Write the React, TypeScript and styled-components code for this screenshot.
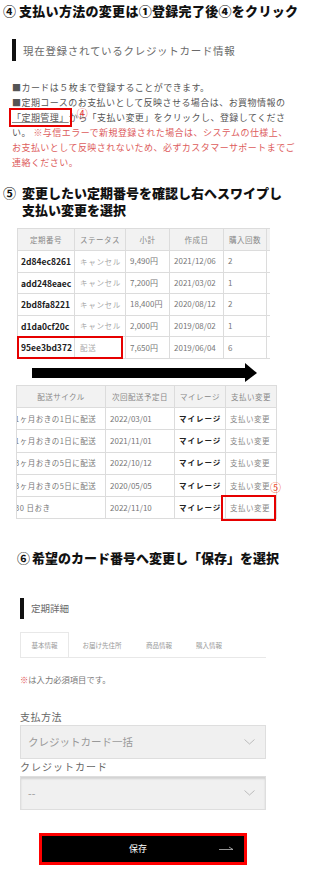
import styled, { createGlobalStyle } from 'styled-components';

const GlobalStyle = createGlobalStyle`
  html, body {
    margin: 0;
    padding: 0;
    background: #fff;
  }
  body {
    font-family: "Noto Sans CJK JP", "Noto Sans", sans-serif;
    color: #333;
  }
`;

const Page = styled.div`
  width: 311px;
  height: 881px;
  overflow: hidden;
  display: flex;
  flex-direction: column;
  align-items: flex-start;
`;

const StepTitle = styled.h2<{ $top: number; $left: number; $spacing?: number }>`
  margin: ${p => p.$top}px 0 0 ${p => p.$left}px;
  display: flex;
  align-items: flex-start;
  gap: ${p => p.$spacing ?? 3}px;
  font-size: 13px;
  font-weight: 900;
  line-height: 17px;
  color: #111;
  white-space: nowrap;
`;

const StepNum = styled.span`
  font-weight: 700;
`;

const StepText = styled.span<{ $ls?: number }>`
  letter-spacing: ${p => p.$ls ?? 0}px;
`;

const SectionLabel = styled.div<{ $top: number; $left: number; $size: number; $ls: number; $h: number }>`
  margin: ${p => p.$top}px 0 0 ${p => p.$left}px;
  height: ${p => p.$h}px;
  border-left: 4px solid #111;
  padding-left: 7px;
  display: flex;
  align-items: center;
  font-size: ${p => p.$size}px;
  letter-spacing: ${p => p.$ls}px;
  color: #6a6a6a;
`;

const Notes = styled.p`
  margin: 18.5px 0 0 12px;
  font-size: 9px;
  letter-spacing: 0.45px;
  line-height: 15px;
  color: #555;
  white-space: nowrap;
`;

const Warn = styled.span`
  color: #dd5c5c;
`;

const LinkBox = styled.span`
  position: relative;
  text-decoration: underline;
  text-decoration-color: #888;
  outline: 2px solid #e60000;
  outline-offset: 1px;
`;

const Callout = styled.span<{ $color: string }>`
  position: absolute;
  font-size: 11px;
  line-height: 11px;
  color: ${p => p.$color};
  letter-spacing: 0;
`;

const TableClip = styled.div<{ $top: number; $left: number; $width: number; $clip?: boolean }>`
  position: relative;
  margin: ${p => p.$top}px 0 0 ${p => p.$left}px;
  width: ${p => p.$width}px;
  overflow: ${p => (p.$clip ? 'hidden' : 'visible')};
`;

const Grid = styled.table<{ $width: number }>`
  width: ${p => p.$width}px;
  table-layout: fixed;
  border-collapse: collapse;
  border: 1px solid #dcdcdc;
`;

const Th = styled.th<{ $w: number; $h: number }>`
  width: ${p => p.$w}px;
  height: ${p => p.$h}px;
  padding: 0;
  background: #f2f2f2;
  border: 1px solid #dcdcdc;
  font-size: 7.5px;
  line-height: 1;
  letter-spacing: 0.5px;
  font-weight: 400;
  color: #888;
  text-align: center;
  white-space: nowrap;
  overflow: hidden;
`;

const Td = styled.td<{ $h: number; $kind?: 'id' | 'status' | 'num' | 'bold' | 'muted' | 'cycle'; $pad?: number }>`
  height: ${p => p.$h}px;
  padding: 0 0 0 ${p => p.$pad ?? 4}px;
  border: 1px solid #dcdcdc;
  line-height: 1;
  white-space: nowrap;
  overflow: hidden;
  font-size: ${p => (p.$kind === 'id' ? 8.5 : p.$kind === 'num' ? 8 : 7.5)}px;
  font-weight: ${p => (p.$kind === 'id' || p.$kind === 'bold' ? 700 : 400)};
  letter-spacing: ${p =>
    p.$kind === 'status' ? 0.7 : p.$kind === 'muted' ? 0.5 : p.$kind === 'bold' ? 1 : p.$kind === 'cycle' ? 0.5 : 0}px;
  color: ${p =>
    p.$kind === 'id' || p.$kind === 'bold'
      ? '#222'
      : p.$kind === 'status'
        ? '#aaa'
        : p.$kind === 'muted'
          ? '#888'
          : '#777'};
  text-indent: ${p => (p.$kind === 'cycle' ? -2 : 0)}px;
`;

const Marker = styled.div<{ $x: number; $y: number; $w: number; $h: number }>`
  position: absolute;
  left: ${p => p.$x}px;
  top: ${p => p.$y}px;
  width: ${p => p.$w}px;
  height: ${p => p.$h}px;
  box-sizing: border-box;
  border: 2.5px solid #e60000;
  pointer-events: none;
`;

const SwipeArrow = styled.svg`
  margin: 3px 0 0 32px;
  display: block;
`;

const Tabs = styled.div`
  margin: 13px 0 0 20px;
  width: 246px;
  height: 25px;
  display: flex;
  border-bottom: 1px solid #e8e8e8;
`;

const Tab = styled.div<{ $w: number; $active?: boolean }>`
  width: ${p => p.$w}px;
  height: 25px;
  box-sizing: border-box;
  display: flex;
  align-items: center;
  justify-content: center;
  border: 1px solid ${p => (p.$active ? '#e8e8e8' : 'transparent')};
  border-bottom: none;
  background: #fff;
  font-size: 6.5px;
  color: #999;
`;

const Required = styled.p`
  margin: 14px 0 0 20px;
  font-size: 8.3px;
  line-height: 14px;
  color: #777;
`;

const Star = styled.span`
  color: #e05050;
`;

const FieldLabel = styled.label<{ $top: number; $ls: number }>`
  margin: ${p => p.$top}px 0 0 20px;
  font-size: 10px;
  line-height: 14px;
  letter-spacing: ${p => p.$ls}px;
  color: #666;
`;

const SelectBox = styled.div<{ $top: number; $inset?: boolean }>`
  margin: ${p => p.$top}px 0 0 20px;
  width: 246px;
  height: 34px;
  box-sizing: border-box;
  padding: 0 10px 0 7px;
  display: flex;
  align-items: center;
  justify-content: space-between;
  background: #f0f0f0;
  border: 1px solid #dedede;
  box-shadow: ${p => (p.$inset ? 'inset 0 2px 2px rgba(0,0,0,0.12)' : 'none')};
  font-size: 10.5px;
  color: #999;
`;

const SaveButton = styled.button`
  margin: 23px 0 0 39px;
  width: 208px;
  height: 32px;
  box-sizing: border-box;
  padding: 0 10px 0 0;
  display: grid;
  grid-template-columns: 1fr auto 1fr;
  align-items: center;
  background: #000;
  border: 3px solid #f00;
  color: #fff;
  font-family: inherit;
  font-size: 9px;
`;

const ButtonArrow = styled.svg`
  justify-self: end;
`;

const Chevron = () => (
  <svg width="11" height="6" viewBox="0 0 11 6">
    <polyline points="0.5,0.5 5.5,5 10.5,0.5" fill="none" stroke="#b5b5b5" strokeWidth="0.9" />
  </svg>
);

const orders = [
  ['2d84ec8261', 'キャンセル', '9,490円', '2021/12/06', '2', '1'],
  ['add248eaec', 'キャンセル', '7,200円', '2021/03/02', '1', '1'],
  ['2bd8fa8221', 'キャンセル', '18,400円', '2020/08/12', '2', '3'],
  ['d1da0cf20c', 'キャンセル', '2,000円', '2019/08/02', '1', '3'],
  ['95ee3bd372', '配送', '7,650円', '2019/06/04', '6', '3'],
];

const cycles = [
  ['1ヶ月おきの1日に配送', '2022/03/01'],
  ['1ヶ月おきの1日に配送', '2021/11/01'],
  ['3ヶ月おきの5日に配送', '2022/10/12'],
  ['3ヶ月おきの5日に配送', '2020/05/05'],
  ['30 日おき', '2022/11/10'],
];

export default function App() {
  return (
    <Page>
      <GlobalStyle />

      <StepTitle $top={2} $left={3} $spacing={3}>
        <StepNum>④</StepNum>
        <StepText $ls={0.3}>支払い方法の変更は①登録完了後④をクリック</StepText>
      </StepTitle>

      <SectionLabel $top={20} $left={12} $size={10.5} $ls={0.7} $h={22}>
        現在登録されているクレジットカード情報
      </SectionLabel>

      <Notes>
        ■カードは５枚まで登録することができます。
        <br />
        ■定期コースのお支払いとして反映させる場合は、お買物情報の
        <br />
        <LinkBox>
          「定期管理」
          <Callout $color="#e63a3a" style={{ right: -19, top: -3 }}>④</Callout>
        </LinkBox>
        から「支払い変更」をクリックし、登録してくださ
        <br />
        い。 <Warn>※与信エラーで新規登録された場合は、システムの仕様上、</Warn>
        <br />
        <Warn>お支払いとして反映されないため、必ずカスタマーサポートまでご</Warn>
        <br />
        <Warn>連絡ください。</Warn>
      </Notes>

      <StepTitle $top={14} $left={3} $spacing={6}>
        <StepNum>⑤</StepNum>
        <StepText>
          変更したい定期番号を確認し右へスワイプし
          <br />
          支払い変更を選択
        </StepText>
      </StepTitle>

      <TableClip $top={10.5} $left={17} $width={253} $clip>
        <Grid $width={304}>
          <thead>
            <tr>
              <Th $w={56} $h={21}>定期番号</Th>
              <Th $w={50} $h={21}>ステータス</Th>
              <Th $w={43} $h={21}>小計</Th>
              <Th $w={53} $h={21}>作成日</Th>
              <Th $w={42} $h={21}>購入回数</Th>
              <Th $w={60} $h={21} />
            </tr>
          </thead>
          <tbody>
            {orders.map(r => (
              <tr key={r[0]}>
                <Td $h={20.6} $kind="id" $pad={3}>{r[0]}</Td>
                <Td $h={20.6} $kind="status" $pad={5}>{r[1]}</Td>
                <Td $h={20.6} $kind="num">{r[2]}</Td>
                <Td $h={20.6} $kind="num">{r[3]}</Td>
                <Td $h={20.6} $kind="num">{r[4]}</Td>
                <Td $h={20.6} $kind="num">{r[5]}</Td>
              </tr>
            ))}
          </tbody>
        </Grid>
        <Marker $x={0} $y={108} $w={106} $h={23} />
      </TableClip>

      <SwipeArrow width="226" height="21" viewBox="0 0 226 21">
        <rect x="0" y="6" width="216" height="10" fill="#000" />
        <polygon points="213,1 225,11 213,20" fill="#000" />
      </SwipeArrow>

      <TableClip $top={2} $left={16} $width={256}>
        <Grid $width={256}>
          <thead>
            <tr>
              <Th $w={88} $h={21}>配送サイクル</Th>
              <Th $w={68} $h={21}>次回配送予定日</Th>
              <Th $w={50} $h={21}>マイレージ</Th>
              <Th $w={50} $h={21}>支払い変更</Th>
            </tr>
          </thead>
          <tbody>
            {cycles.map((r, i) => (
              <tr key={i}>
                <Td $h={21.3} $kind="cycle" $pad={0}>{r[0]}</Td>
                <Td $h={21.3} $kind="num">{r[1]}</Td>
                <Td $h={21.3} $kind="bold">マイレージ</Td>
                <Td $h={21.3} $kind="muted" $pad={4}>支払い変更</Td>
              </tr>
            ))}
          </tbody>
        </Grid>
        <Marker $x={205} $y={110} $w={55} $h={26} />
        <Callout $color="#f04a1e" style={{ left: 254, top: 97 }}>⑤</Callout>
      </TableClip>

      <StepTitle $top={30} $left={17} $spacing={2}>
        <StepNum>⑥</StepNum>
        <StepText>希望のカード番号へ変更し「保存」を選択</StepText>
      </StepTitle>

      <SectionLabel $top={31.5} $left={20} $size={9.5} $ls={0} $h={21}>
        定期詳細
      </SectionLabel>

      <Tabs>
        <Tab $w={49} $active>基本情報</Tab>
        <Tab $w={66}>お届け先住所</Tab>
        <Tab $w={48}>商品情報</Tab>
        <Tab $w={52}>購入情報</Tab>
      </Tabs>

      <Required>
        <Star>※</Star>は入力必須項目です。
      </Required>

      <FieldLabel $top={24} $ls={0.5}>支払方法</FieldLabel>
      <SelectBox $top={1}>
        <span>クレジットカード一括</span>
        <Chevron />
      </SelectBox>

      <FieldLabel $top={1} $ls={1}>クレジットカード</FieldLabel>
      <SelectBox $top={2} $inset>
        <span>--</span>
        <Chevron />
      </SelectBox>

      <SaveButton type="button">
        <span />
        <span>保存</span>
        <ButtonArrow width="15" height="5" viewBox="0 0 15 5">
          <line x1="0" y1="3.5" x2="14" y2="3.5" stroke="#bbb" strokeWidth="0.8" />
          <line x1="10" y1="1" x2="14" y2="3.5" stroke="#bbb" strokeWidth="0.8" />
        </ButtonArrow>
      </SaveButton>
    </Page>
  );
}
